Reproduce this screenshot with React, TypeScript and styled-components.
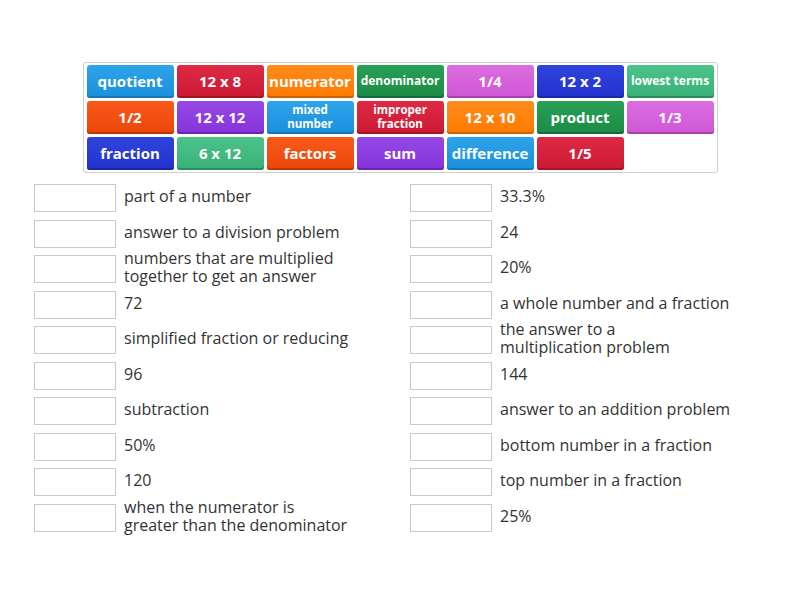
import React from "react";
import styled, { createGlobalStyle } from "styled-components";

const Global = createGlobalStyle`
  html, body { margin: 0; padding: 0; background: #fff; }
  body { font-family: "Open Sans", "Noto Sans", sans-serif; }
`;

const Page = styled.div`
  width: 800px;
  height: 600px;
  padding-top: 62px;
  box-sizing: border-box;
`;

const Bank = styled.div`
  width: 635px;
  margin: 0 auto;
  box-sizing: border-box;
  border: 1px solid #cfcfcf;
  border-radius: 3px;
  padding: 2px 3px 2px 3px;
  display: grid;
  grid-template-columns: repeat(7, 87px);
  grid-auto-rows: 33px;
  column-gap: 3px;
  row-gap: 3px;
`;

const palette: Record<string, [string, string, string]> = {
  blue: ["#2ea4ea", "#1a8fdc", "#1577b8"],
  red: ["#de2a45", "#cc1a33", "#a5142a"],
  orange: ["#ff8b1c", "#ff7a00", "#d06000"],
  green: ["#27a054", "#1d8a45", "#166c36"],
  magenta: ["#da6ee0", "#cf56d6", "#a840ae"],
  darkblue: ["#2f44dc", "#2232cc", "#1a27a2"],
  teal: ["#4cc38a", "#39b077", "#2b8c5d"],
  orangered: ["#f85a1c", "#ea4608", "#bd3706"],
  purple: ["#9548e6", "#8533db", "#6a25b3"],
};

const Tile = styled.div<{ $c: string; $size: number }>`
  display: flex;
  align-items: center;
  justify-content: center;
  text-align: center;
  border-radius: 3px;
  color: #fff;
  font-weight: 700;
  font-size: ${(p) => p.$size}px;
  line-height: ${(p) => (p.$size < 12 ? 14 : 18)}px;
  background: linear-gradient(
    ${(p) => palette[p.$c][0]},
    ${(p) => palette[p.$c][1]}
  );
  box-shadow: inset 0 -2px 0 ${(p) => palette[p.$c][2]};
  white-space: nowrap;
  padding-bottom: 2px;
  box-sizing: border-box;
`;

const Lists = styled.div`
  display: grid;
  grid-template-columns: 376px 376px;
  padding-left: 34px;
  margin-top: 11px;
`;

const Column = styled.div`
  display: flex;
  flex-direction: column;
  gap: 7.5px;
`;

const Row = styled.div`
  display: flex;
  align-items: center;
  height: 28px;
`;

const Slot = styled.div`
  width: 82px;
  height: 28px;
  box-sizing: border-box;
  border: 1px solid #c9c9c9;
  background: #fff;
  flex-shrink: 0;
`;

const Label = styled.div`
  margin-left: 8px;
  font-size: 16px;
  line-height: 18px;
  color: #333;
  margin-top: -4px;
  white-space: nowrap;
`;

const tiles: [string, string, number][] = [
  ["quotient", "blue", 15],
  ["12 x 8", "red", 15],
  ["numerator", "orange", 15],
  ["denominator", "green", 12],
  ["1/4", "magenta", 15],
  ["12 x 2", "darkblue", 15],
  ["lowest terms", "teal", 12],
  ["1/2", "orangered", 15],
  ["12 x 12", "purple", 15],
  ["mixed\nnumber", "blue", 11.5],
  ["improper\nfraction", "red", 11.5],
  ["12 x 10", "orange", 15],
  ["product", "green", 15],
  ["1/3", "magenta", 15],
  ["fraction", "darkblue", 15],
  ["6 x 12", "teal", 15],
  ["factors", "orangered", 15],
  ["sum", "purple", 15],
  ["difference", "blue", 15],
  ["1/5", "red", 15],
];

const left = [
  "part of a number",
  "answer to a division problem",
  "numbers that are multiplied\ntogether to get an answer",
  "72",
  "simplified fraction or reducing",
  "96",
  "subtraction",
  "50%",
  "120",
  "when the numerator is\ngreater than the denominator",
];

const right = [
  "33.3%",
  "24",
  "20%",
  "a whole number and a fraction",
  "the answer to a\nmultiplication problem",
  "144",
  "answer to an addition problem",
  "bottom number in a fraction",
  "top number in a fraction",
  "25%",
];

const Lines = ({ text }: { text: string }) => (
  <>
    {text.split("\n").map((l, i) => (
      <div key={i}>{l}</div>
    ))}
  </>
);

export default function App() {
  return (
    <Page>
      <Global />
      <Bank>
        {tiles.map(([t, c, s]) => (
          <Tile key={t} $c={c} $size={s}>
            <div>
              <Lines text={t} />
            </div>
          </Tile>
        ))}
      </Bank>
      <Lists>
        {[left, right].map((col, ci) => (
          <Column key={ci}>
            {col.map((t) => (
              <Row key={t}>
                <Slot />
                <Label>
                  <Lines text={t} />
                </Label>
              </Row>
            ))}
          </Column>
        ))}
      </Lists>
    </Page>
  );
}
